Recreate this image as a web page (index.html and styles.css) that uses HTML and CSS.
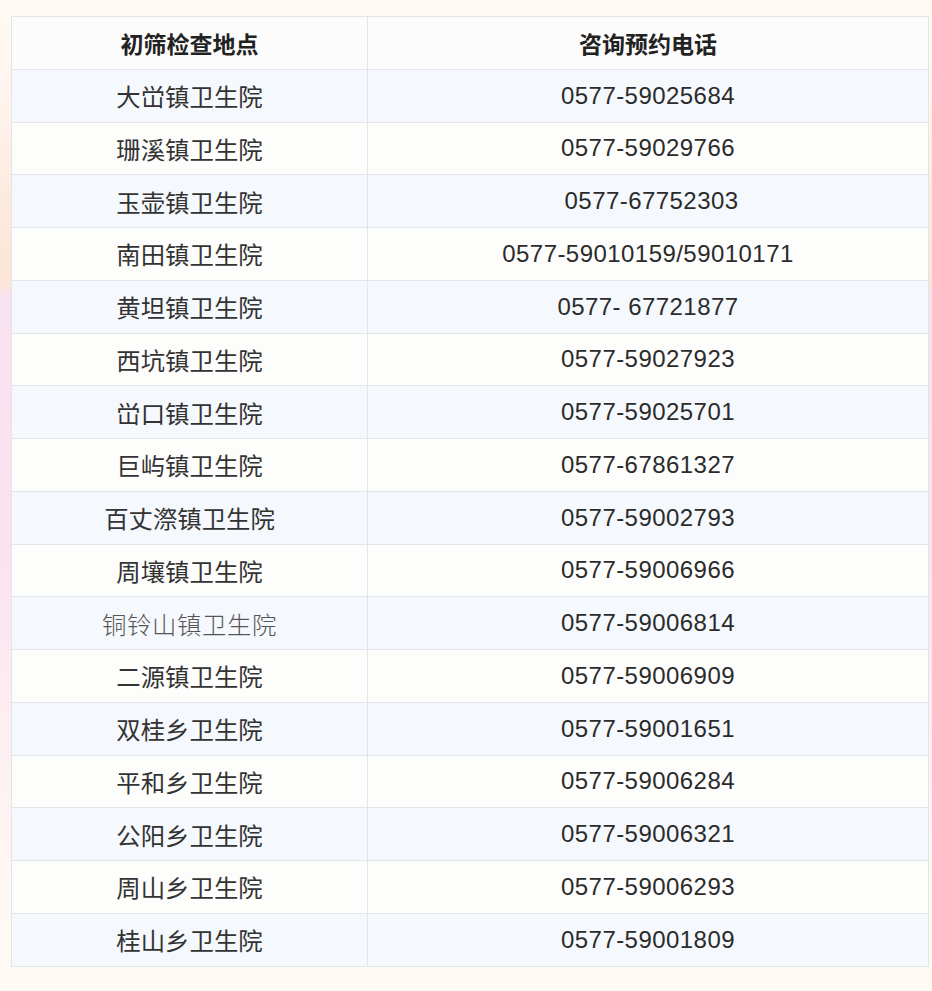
FILE: index.html
```html
<!DOCTYPE html>
<html lang="zh-CN">
<head>
<meta charset="utf-8">
<title>初筛检查地点</title>
<link rel="stylesheet" href="styles.css">
</head>
<body>
<div class="page">
<table class="sites">
<thead>
<tr><th>初筛检查地点</th><th>咨询预约电话</th></tr>
</thead>
<tbody>
<tr><td class="name">大峃镇卫生院</td><td class="tel">0577-59025684</td></tr>
<tr><td class="name">珊溪镇卫生院</td><td class="tel">0577-59029766</td></tr>
<tr><td class="name">玉壶镇卫生院</td><td class="tel">&nbsp;0577-67752303</td></tr>
<tr><td class="name">南田镇卫生院</td><td class="tel">0577-59010159/59010171</td></tr>
<tr><td class="name">黄坦镇卫生院</td><td class="tel">0577- 67721877</td></tr>
<tr><td class="name">西坑镇卫生院</td><td class="tel">0577-59027923</td></tr>
<tr><td class="name">峃口镇卫生院</td><td class="tel">0577-59025701</td></tr>
<tr><td class="name">巨屿镇卫生院</td><td class="tel">0577-67861327</td></tr>
<tr><td class="name">百丈漈镇卫生院</td><td class="tel">0577-59002793</td></tr>
<tr><td class="name">周壤镇卫生院</td><td class="tel">0577-59006966</td></tr>
<tr><td class="name alt">铜铃山镇卫生院</td><td class="tel">0577-59006814</td></tr>
<tr><td class="name">二源镇卫生院</td><td class="tel">0577-59006909</td></tr>
<tr><td class="name">双桂乡卫生院</td><td class="tel">0577-59001651</td></tr>
<tr><td class="name">平和乡卫生院</td><td class="tel">0577-59006284</td></tr>
<tr><td class="name">公阳乡卫生院</td><td class="tel">0577-59006321</td></tr>
<tr><td class="name">周山乡卫生院</td><td class="tel">0577-59006293</td></tr>
<tr><td class="name">桂山乡卫生院</td><td class="tel">0577-59001809</td></tr>
</tbody>
</table>
</div>
</body>
</html>
```
FILE: styles.css
```css
html, body {
  margin: 0;
  padding: 0;
}
body {
  width: 932px;
  height: 991px;
  overflow: hidden;
  background: linear-gradient(to bottom,
    #fffaf3 0px,
    #fff5ee 90px,
    #fdeadf 200px,
    #fce4d8 285px,
    #f9e2f0 295px,
    #fbe2ef 560px,
    #fdeef2 720px,
    #fff6f2 860px,
    #fffaf3 991px);
  font-family: "Noto Sans CJK SC", "Noto Sans", sans-serif;
}
.page {
  padding: 16px 3px 0 11px;
  height: 975px;
  background: linear-gradient(to bottom, #fffaf3 0, #fffaf3 16px, transparent 16px, transparent 966px, #fffaf3 966px);
  background-repeat: no-repeat;
  background-size: 100% 100%;
}
.sites {
  width: 918px;
  border-collapse: collapse;
  table-layout: fixed;
  background: #fdfdfd;
}
.sites th, .sites td {
  border: 1px solid #e2e5ea;
  height: 52.75px;
  padding: 0;
  text-align: center;
  vertical-align: middle;
  box-sizing: border-box;
}
.sites th:first-child, .sites td:first-child {
  width: 356px;
}
.sites th {
  font-weight: 700;
  font-size: 23px;
  color: #222;
  background: #fcfcfc;
}
.sites tbody tr:nth-child(odd) td {
  background: #f5f8fd;
}
.sites tbody tr:nth-child(even) td {
  background: #fdfdfc;
}
.name {
  font-size: 24.4px;
  color: #333;
  font-weight: 400;
}
.name.alt {
  color: #555;
  font-weight: 300;
  letter-spacing: 0.6px;
}
.tel {
  font-family: "Liberation Sans", Arial, sans-serif;
  font-size: 24px;
  letter-spacing: 0.45px;
  color: #2b2b2b;
}
```
